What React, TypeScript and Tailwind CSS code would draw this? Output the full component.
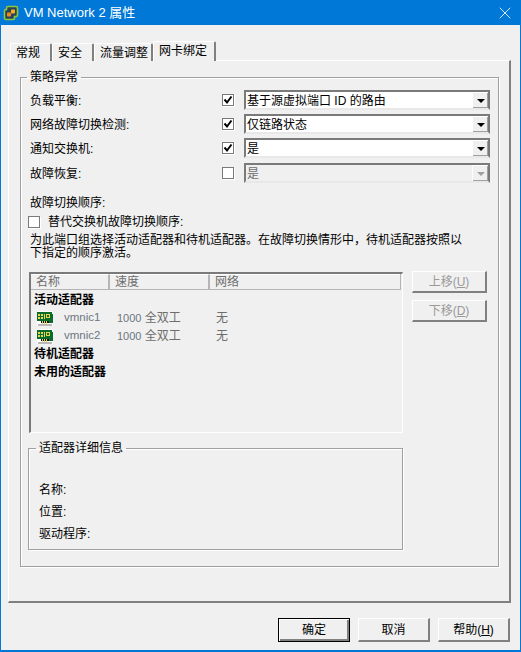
import React from 'react';
import { X } from 'lucide-react';

const FONT = "font-['Liberation_Sans','Noto_Sans_CJK_SC',sans-serif]";

// Logo de la barre de titre
const VmLogo = () => (
  <svg width="16" height="16" viewBox="0 0 16 16" className="shrink-0">
    <path d="M5 1.500h8a1.500 1.500 0 0 1 1.500 1.500v7a1.500 1.500 0 0 1-1.500 1.500h-1.500v1.500a1.500 1.500 0 0 1-1.500 1.500H3a1.500 1.500 0 0 1-1.500-1.500V6A1.500 1.500 0 0 1 3 4.500h.5V3A1.500 1.500 0 0 1 5 1.500z" fill="#27425c" stroke="#8dc63f" strokeWidth="1.600" />
    <rect x="8" y="4.500" width="4" height="4" rx="0.800" fill="#f7b21a" />
    <rect x="4" y="7.500" width="4" height="4" rx="0.800" fill="#f08a1d" />
  </svg>
);

// Icône de carte réseau
const NicIcon = () => (
  <svg width="16" height="15" viewBox="0 0 16 15" className="shrink-0">
    <rect x="0" y="0" width="16" height="15" fill="#ffffff" />
    <rect x="0" y="1" width="15" height="9" fill="#0b6b2c" />
    <rect x="11" y="3" width="5" height="9" fill="#0b6b2c" />
    <rect x="1" y="3" width="2" height="2" fill="#e6d84a" />
    <rect x="4" y="3" width="2" height="2" fill="#e6d84a" />
    <rect x="1" y="6" width="2" height="2" fill="#e6d84a" />
    <rect x="4" y="6" width="2" height="2" fill="#e6d84a" />
    <rect x="7" y="3" width="1" height="5" fill="#e6d84a" />
    <rect x="9.500" y="3.500" width="3" height="3" fill="#0b6b2c" stroke="#e6d84a" />
    <rect x="4" y="10" width="8" height="2" fill="#111111" />
    <rect x="5" y="10" width="1" height="3" fill="#e6d84a" />
    <rect x="7" y="10" width="1" height="3" fill="#e6d84a" />
    <rect x="9" y="10" width="1" height="3" fill="#e6d84a" />
    <rect x="1" y="13" width="14" height="2" fill="#b9b9b9" />
  </svg>
);

const Checkbox = ({ checked }: { checked?: boolean }) => (
  <span className="block w-[12px] h-[12px] bg-white border border-[#7a7a7a] shadow-[1px_1px_0_#ffffff] flex items-center justify-center">
    {checked && (
      <svg width="10" height="10" viewBox="0 0 10 10">
        <path d="M1.500 4.500 L4 7.500 L8.500 1.500" fill="none" stroke="#000" strokeWidth="2" />
      </svg>
    )}
  </span>
);

const ComboBox = ({ value, disabled }: { value: string; disabled?: boolean }) => (
  <div className={`h-[20px] border-t-2 border-l-2 border-r-2 border-[#7a7a7a] border-b-2 border-b-[#e8e8e8] flex items-stretch ${disabled ? 'bg-[#f0f0f0] text-[#6d6d6d]' : 'bg-white text-black'}`}>
    <span className="flex-1 pl-[1px] leading-[18px]">{value}</span>
    <span className="w-[16px] bg-[#f0f0f0] border-l border-t border-white shadow-[inset_-1px_-1px_0_#a0a0a0] flex items-center justify-center">
      <span className={`w-0 h-0 border-l-[4px] border-r-[4px] border-t-[4px] border-l-transparent border-r-transparent ${disabled ? 'border-t-[#a0a0a0]' : 'border-t-black'}`} />
    </span>
  </div>
);

const GroupBox = ({ title, className, children }: { title: string; className: string; children: React.ReactNode }) => (
  <fieldset className={`border border-[#a0a0a0] shadow-[inset_1px_1px_0_#ffffff,1px_1px_0_#ffffff] ${className}`}>
    <legend className="-ml-[3px] px-[3px] h-[14px] leading-[14px]">{title}</legend>
    {children}
  </fieldset>
);

const MoveButton = ({ text, hotkey }: { text: string; hotkey: string }) => (
  <button className="w-[75px] h-[22px] bg-[#f0f0f0] border-t border-l border-white border-r-2 border-b-2 border-r-[#808080] border-b-[#808080] text-[#9a9a9a] flex items-center justify-center">
    {text}(<span className="underline">{hotkey}</span>)
  </button>
);

const FooterButton = ({ label, isDefault }: { label: React.ReactNode; isDefault?: boolean }) => (
  <button className={`w-[72px] h-[24px] bg-[#f0f0f0] text-black flex items-center justify-center ${isDefault ? 'border border-black shadow-[inset_1px_1px_0_#ffffff,inset_-2px_-2px_0_#808080]' : 'border-t border-l border-white border-r-2 border-b-2 border-r-[#808080] border-b-[#808080]'}`}>
    {label}
  </button>
);

const Tab = ({ label, className }: { label: string; className: string }) => (
  <div className={`h-[18px] bg-[#f0f0f0] border-t border-l border-white border-r-2 border-r-[#808080] rounded-t-[2px] flex items-center justify-start pl-[5px] ${className}`}>
    {label}
  </div>
);

const Field = ({ label }: { label: string }) => <div className="h-[22px] leading-[22px]">{label}</div>;

export default function App() {
  const policies = [
    { label: '负载平衡:', value: '基于源虚拟端口 ID 的路由', checked: true },
    { label: '网络故障切换检测:', value: '仅链路状态', checked: true },
    { label: '通知交换机:', value: '是', checked: true },
    { label: '故障恢复:', value: '是', checked: false, disabled: true },
  ];

  const adapters = ['vmnic1', 'vmnic2'];

  return (
    <div className={`w-[521px] h-[652px] flex flex-col bg-[#f0f0f0] border-x border-b-2 border-[#0078d7] text-[12px] text-black overflow-hidden ${FONT}`}>
      {/* Barre de titre */}
      <div className="h-[25px] shrink-0 bg-[#0078d7] flex items-center pl-[2px] pr-[5px] text-white">
        <VmLogo />
        <span className="ml-[5px] flex-1 text-[13px]">VM Network 2 属性</span>
        <X className="w-[20px] h-[20px]" strokeWidth={1} />
      </div>

      {/* Onglets */}
      <div className="flex items-end mt-[16px] ml-[9px] h-[20px] relative z-10 -mb-px">
        <Tab label="常规" className="w-[42px]" />
        <Tab label="安全" className="w-[42px]" />
        <Tab label="流量调整" className="w-[59px]" />
        <div className="h-[20px] w-[63px] bg-[#f0f0f0] border-t border-l border-white border-r-2 border-r-[#808080] rounded-t-[2px] flex items-center justify-start pl-[5px] pb-[2px]">网卡绑定</div>
      </div>

      {/* Contenu de l'onglet */}
      <div className="ml-[7px] w-[503px] h-[543px] shrink-0 border-t border-l border-white border-r-2 border-b-2 border-r-[#808080] border-b-[#808080] pt-[9px] pl-[11px]">
        <GroupBox title="策略异常" className="w-[479px] h-[497px] pl-[9px]">
          <div className="grid grid-cols-[192px_22px_246px] grid-rows-[20px_20px_20px_21px] gap-y-[4px] items-end mt-[6px]">
            {policies.map((p) => (
              <React.Fragment key={p.label}>
                <span className="h-[20px] leading-[22px]">{p.label}</span>
                <span className="h-[20px] flex items-center"><Checkbox checked={p.checked} /></span>
                <ComboBox value={p.value} disabled={p.disabled} />
              </React.Fragment>
            ))}
          </div>

          <div className="mt-[14px] h-[13px] leading-[13px]">故障切换顺序:</div>
          <div className="mt-[5px] -ml-[2px] flex items-center h-[13px]">
            <Checkbox />
            <span className="ml-[8px]">替代交换机故障切换顺序:</span>
          </div>
          <p className="mt-[6px] leading-[13px] w-[440px]">为此端口组选择活动适配器和待机适配器。在故障切换情形中，待机适配器按照以下指定的顺序激活。</p>

          <div className="mt-[12px] -ml-px flex items-start gap-[9px]">
            <div className="w-[374px]">
              {/* Liste des adaptateurs */}
              <div className="h-[161px] border-t-2 border-l-2 border-[#7a7a7a] border-r border-b border-r-white border-b-white">
                <div className="grid grid-cols-[79px_100px_1fr] h-[16px] mr-px leading-[15px] text-[#6d6d6d] border-b border-r border-[#b5b5b5]">
                  <span className="pl-[5px] border-r-2 border-[#b5b5b5] border-t border-t-white">名称</span>
                  <span className="pl-[5px] border-r-2 border-[#b5b5b5] border-t border-t-white">速度</span>
                  <span className="pl-[5px] border-t border-t-white">网络</span>
                </div>
                <div className="pt-[1px] pl-[3px]">
                  <div className="h-[18px] leading-[18px] font-bold">活动适配器</div>
                  {adapters.map((name) => (
                    <div key={name} className="h-[18px] flex items-center text-[#6d6d6d]">
                      <span className="ml-[3px] w-[27px]"><NicIcon /></span>
                      <span className="w-[53px] text-[11.500px] text-[#6d7680]">{name}</span>
                      <span className="w-[99px]"><span className="text-[11px] text-[#6d7680]">1000</span> 全双工</span>
                      <span>无</span>
                    </div>
                  ))}
                  <div className="h-[18px] leading-[18px] font-bold">待机适配器</div>
                  <div className="h-[18px] leading-[18px] font-bold">未用的适配器</div>
                </div>
              </div>

              <GroupBox title="适配器详细信息" className="mt-[8px] -ml-px w-[375px] h-[109px] pl-[10px]">
                <div className="mt-[24px]">
                  <Field label="名称:" />
                  <Field label="位置:" />
                  <Field label="驱动程序:" />
                </div>
              </GroupBox>
            </div>

            <div className="flex flex-col gap-[7px] -mt-px">
              <MoveButton text="上移" hotkey="U" />
              <MoveButton text="下移" hotkey="D" />
            </div>
          </div>
        </GroupBox>
      </div>

      {/* Boutons du bas */}
      <div className="flex justify-end gap-[8px] mt-[15px] mr-[10px]">
        <FooterButton label="确定" isDefault />
        <FooterButton label="取消" />
        <FooterButton label={<>帮助(<span className="underline">H</span>)</>} />
      </div>
    </div>
  );
}
